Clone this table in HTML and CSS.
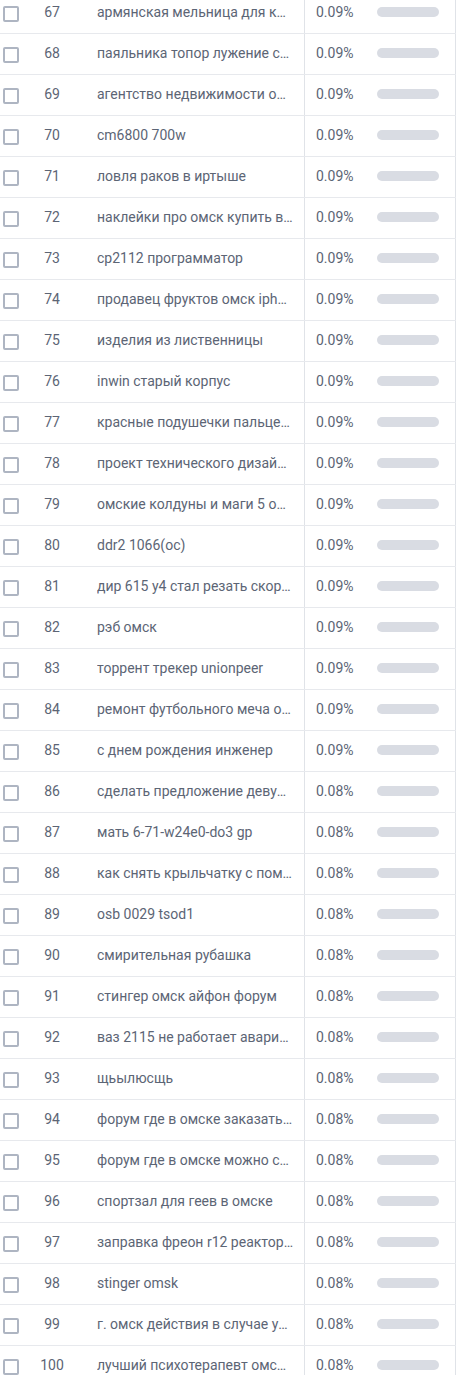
FILE: index.html
```html
<!DOCTYPE html>
<html lang="ru">
<head>
<meta charset="utf-8">
<link rel="stylesheet" href="styles.css">
</head>
<body>
<div class="table" id="table"></div>
<script>
const rows = [
  [67,"армянская мельница для кофе купить","0.09%"],
  [68,"паяльника топор лужение своими руками","0.09%"],
  [69,"агентство недвижимости омск отзывы","0.09%"],
  [70,"cm6800 700w","0.09%"],
  [71,"ловля раков в иртыше","0.09%"],
  [72,"наклейки про омск купить в омске","0.09%"],
  [73,"cp2112 программатор","0.09%"],
  [74,"продавец фруктов омск iphone","0.09%"],
  [75,"изделия из лиственницы","0.09%"],
  [76,"inwin старый корпус","0.09%"],
  [77,"красные подушечки пальцев рук","0.09%"],
  [78,"проект технического дизайна помещений","0.09%"],
  [79,"омские колдуны и маги 5 ошибок","0.09%"],
  [80,"ddr2 1066(oc)","0.09%"],
  [81,"дир 615 у4 стал резать скорость","0.09%"],
  [82,"рэб омск","0.09%"],
  [83,"торрент трекер unionpeer","0.09%"],
  [84,"ремонт футбольного меча омск","0.09%"],
  [85,"с днем рождения инженер","0.09%"],
  [86,"сделать предложение девушке омск","0.08%"],
  [87,"мать 6-71-w24e0-do3 gp","0.08%"],
  [88,"как снять крыльчатку с помпы","0.08%"],
  [89,"osb 0029 tsod1","0.08%"],
  [90,"смирительная рубашка","0.08%"],
  [91,"стингер омск айфон форум","0.08%"],
  [92,"ваз 2115 не работает аварийка","0.08%"],
  [93,"щьылюсщь","0.08%"],
  [94,"форум где в омске заказать торт","0.08%"],
  [95,"форум где в омске можно сдать","0.08%"],
  [96,"спортзал для геев в омске","0.08%"],
  [97,"заправка фреон r12 реакторный","0.08%"],
  [98,"stinger omsk","0.08%"],
  [99,"г. омск действия в случае угрозы","0.08%"],
  [100,"лучший психотерапевт омска отзывы","0.08%"]
];
const t = document.getElementById('table');
for (const [n, q, p] of rows) {
  const r = document.createElement('div');
  r.className = 'row';
  r.innerHTML = '<div class="c-check"><span class="box"></span></div>' +
    '<div class="c-num">' + n + '</div>' +
    '<div class="c-text"><span class="q">' + q + '</span></div>' +
    '<div class="c-pct"><span class="pct">' + p + '</span><span class="bar"></span></div>';
  t.appendChild(r);
}
</script>
</body>
</html>
```

FILE: styles.css
```css
html, body {
  margin: 0;
  padding: 0;
  background: #ffffff;
}
body {
  font-family: Roboto, "Liberation Sans", sans-serif;
  font-size: 14px;
  color: #5c6575;
  overflow: hidden;
}
.table {
  margin-top: -7px;
  width: 456px;
}
.row {
  display: grid;
  grid-template-columns: 22px 60px 222px 152px;
  height: 40px;
  border-bottom: 1px solid #e7e9ed;
  align-items: stretch;
}
.c-check {
  display: flex;
  align-items: center;
  padding-left: 3px;
}
.box {
  width: 16px;
  height: 16px;
  box-sizing: border-box;
  border: 2px solid #aeb5c2;
  border-radius: 2px;
  margin-top: 2px;
}
.c-num {
  display: flex;
  align-items: center;
  justify-content: center;
  padding-bottom: 2px;
}
.c-text {
  display: flex;
  align-items: center;
  padding: 0 10.5px 2px 15px;
  min-width: 0;
}
.q {
  white-space: nowrap;
  overflow: hidden;
  text-overflow: ellipsis;
  display: block;
  width: 100%;
}
.c-pct {
  display: flex;
  align-items: center;
  border-left: 1px solid #e0e3e8;
  border-right: 1px solid #e0e3e8;
  padding: 0 0 2px 11px;
}
.pct {
  width: 61px;
  flex: none;
}
.bar {
  width: 62px;
  height: 10px;
  border-radius: 5px;
  background: #d9dce3;
  flex: none;
}
```
